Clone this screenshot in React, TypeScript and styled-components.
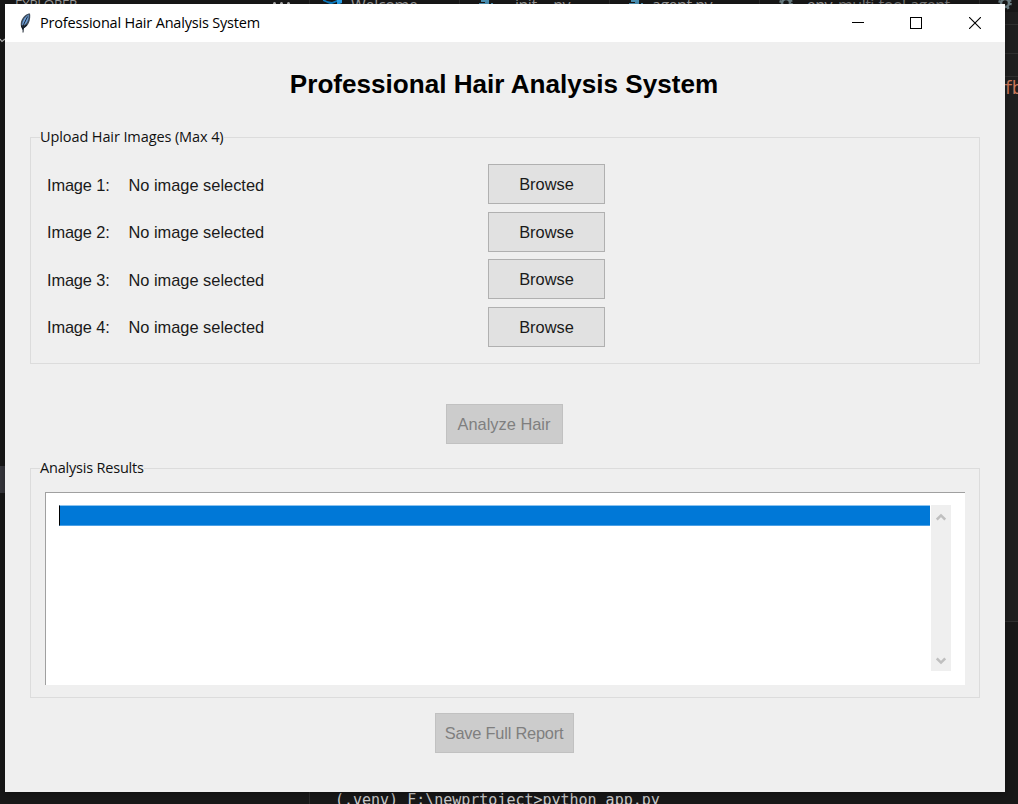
import React from "react";
import styled, { createGlobalStyle } from "styled-components";

const GlobalStyle = createGlobalStyle`
  * { box-sizing: border-box; }
  body { margin: 0; background: #181818; overflow: hidden; }
`;

const Desktop = styled.div`
  position: relative;
  width: 1018px;
  height: 804px;
  overflow: hidden;
  background: #181818;
`;

const Editor = styled.div`
  display: flex;
  flex-direction: column;
  justify-content: space-between;
  height: 804px;
`;

const TabStrip = styled.div`
  display: flex;
  height: 12px;
  overflow: hidden;
  font: 16px/20px "Open Sans", sans-serif;
  color: #9d9d9d;
`;

const Tab = styled.div<{ $width: number; $pad?: number; $tracking?: number }>`
  display: flex;
  flex: none;
  gap: 9px;
  width: ${(p) => p.$width}px;
  height: 20px;
  margin-top: -5px;
  padding-left: ${(p) => p.$pad ?? 18}px;
  border-right: 1px solid #2b2b2b;
  letter-spacing: ${(p) => p.$tracking ?? -0.3}px;
  white-space: pre;
  svg { flex: none; }
`;

const SideTitle = styled.span`
  font-size: 13.5px;
  width: 249px;
  margin-top: -1px;
  line-height: 20px;
  letter-spacing: -0.4px;
`;

const Dots = styled.span`
  display: flex;
  gap: 4px;
  padding-top: 7px;
  i { width: 3px; height: 3px; border-radius: 50%; background: #c0c0c0; }
`;

const DimText = styled.span`
  margin-left: -3px;
  color: #7a7a7a;
`;

const RightEdge = styled.div`
  position: absolute;
  left: 1005px;
  top: 12px;
  width: 13px;
  height: 610px;
  background: #1f1f1f;
  border-bottom: 1px solid #2f2f2f;
`;

const EdgeLine = styled.div<{ $gap: number }>`
  height: 1px;
  margin-top: ${(p) => p.$gap}px;
  background: #303030;
`;

const CodeText = styled.div`
  margin-left: -2px;
  font: 17px/22px "DejaVu Sans Mono", monospace;
  letter-spacing: -1.5px;
  color: #ce7a5c;
`;

const LeftEdge = styled.div`
  position: absolute;
  left: 0;
  top: 466px;
  width: 5px;
  height: 27px;
  background: #37373d;
`;

const EdgeChevron = styled.svg`
  position: absolute;
  left: 0;
  top: 37px;
`;

const Terminal = styled.div`
  height: 14px;
  margin-left: 309px;
  padding-left: 25px;
  border-left: 1px solid #2b2b2b;
  overflow: hidden;
  white-space: pre;
  color: #cccccc;
  font: 15px/20px "DejaVu Sans Mono", monospace;
  letter-spacing: -0.01px;
`;

const Window = styled.main`
  position: absolute;
  left: 5px;
  top: 4px;
  width: 1000px;
  height: 788px;
  display: flex;
  flex-direction: column;
  background: #efefef;
  box-shadow: 0 2px 8px rgba(0, 0, 0, 0.35);
`;

const TitleBar = styled.header`
  display: flex;
  align-items: center;
  flex: none;
  height: 38px;
  padding: 0 1px 0 13px;
  background: #fff;
`;

const TitleText = styled.span`
  flex: 1;
  margin-left: 7px;
  font: 14.5px/20px "Open Sans", sans-serif;
  letter-spacing: -0.19px;
  color: #000;
`;

const WindowButton = styled.div`
  display: flex;
  align-items: center;
  justify-content: center;
  width: 58.5px;
  height: 38px;
`;

const Body = styled.div`
  display: flex;
  flex-direction: column;
  align-items: center;
  flex: 1;
  padding: 27px 27px 0 25px;
  font-family: "Liberation Sans", Arial, sans-serif;
`;

const Heading = styled.h1`
  margin: 0 0 28px;
  height: 30px;
  font-size: 26.1px;
  line-height: 30px;
  font-weight: 700;
  color: #000;
  white-space: nowrap;
`;

const Group = styled.fieldset<{ $height: number; $pad: string }>`
  align-self: flex-start;
  width: 950px;
  height: ${(p) => p.$height}px;
  margin: 0;
  padding: ${(p) => p.$pad};
  border: 1px solid #dcdcdc;
`;

const Legend = styled.legend<{ $spacing: number; $inset: number }>`
  height: 20px;
  margin-left: ${(p) => p.$inset}px;
  padding: 0;
  font: 14.5px/20px "Open Sans", sans-serif;
  letter-spacing: ${(p) => p.$spacing}px;
  color: #111;
`;

const UploadGrid = styled.div`
  display: grid;
  grid-template-columns: 81.4px 359.6px 117px;
  grid-auto-rows: 40px;
  row-gap: 7.5px;
  align-items: center;
  font-size: 16.4px;
  line-height: 20px;
  color: #1a1a1a;
`;

const SlotText = styled.span<{ $tracking?: number }>`
  padding-top: 1px;
  letter-spacing: ${(p) => p.$tracking ?? 0}px;
`;

const Button = styled.button<{ $width: number; $tracking?: number }>`
  width: ${(p) => p.$width}px;
  height: 40px;
  padding: 0;
  border: 1px solid #b0b0b0;
  border-radius: 0;
  background: #e1e1e1;
  color: #1a1a1a;
  font: 16.4px/20px "Liberation Sans", Arial, sans-serif;
  letter-spacing: ${(p) => p.$tracking ?? 0}px;
  &:disabled {
    border-color: #c1c1c1;
    background: #cccccc;
    color: #7f7f7f;
  }
`;

const ActionRow = styled.div<{ $above: number; $below: number }>`
  margin: ${(p) => p.$above}px 0 ${(p) => p.$below}px;
  height: 40px;
`;

const TextFrame = styled.div`
  display: flex;
  width: 920px;
  height: 193px;
  padding: 12px 14px 13px 13px;
  background: #fff;
  border-top: 1px solid #a0a0a0;
  border-left: 1px solid #a0a0a0;
`;

const TextArea = styled.div`
  flex: 1;
  margin-right: 1px;
`;

const SelectedLine = styled.div`
  height: 21px;
  border-left: 1px solid #000;
  border-top: 1px solid #8cc3ee;
  border-bottom: 1px solid #4ca0e5;
  background: #0078d7;
`;

const ScrollBar = styled.div`
  display: flex;
  flex-direction: column;
  justify-content: space-between;
  align-items: center;
  width: 20px;
  height: 166px;
  padding: 8px 1px 6px 0;
  background: #efefef;
`;

const Feather = () => (
  <svg width="15" height="20" viewBox="0 0 15 20">
    <path d="M4.6 17.5 3.6 14.5C1.6 11 3.3 5.5 7 2.5 9 .9 11 .5 12 .6c.5 2.6.3 6-1 9-1.2 2.8-3 4.6-5 5.4z" fill="#3d4a5a" />
    <path d="M4.2 12C4 9 6 4.6 10.7 1.6c.3 3.2-.6 7.2-3.4 9.9L5.4 12z" fill="#6d9fd8" />
    <path d="M9.6 3.5 5.6 11.5 5 19.5" fill="none" stroke="#1b2430" strokeWidth="1" />
    <path d="M3.4 12.5 5 16M8.7 11.8 6 14.5" fill="none" stroke="#111820" strokeWidth="1.4" />
  </svg>
);

const Python = () => (
  <svg width="15" height="18" viewBox="0 0 15 18">
    <path d="M3 4h8v5H5v5H1V8h6V7H3zM13 8h2v7H6v-4h7z" fill="#4c94b8" />
  </svg>
);

const Gear = () => (
  <svg width="16" height="18" viewBox="0 0 16 18">
    <circle cx="8" cy="8" r="4" fill="none" stroke="#6d8086" strokeWidth="2.5" />
    <circle cx="8" cy="8" r="5.8" fill="none" stroke="#6d8086" strokeWidth="2" strokeDasharray="2.3 2.25" />
  </svg>
);

const CodeLogo = () => (
  <svg width="19" height="18" viewBox="0 0 19 18">
    <path d="M0 4 4 6l5 1 5-2v2L9 9H7L0 6z" fill="#0b7dc4" />
    <path d="M14 0h5v8l-5 2z" fill="#2aa4ee" />
  </svg>
);

const Arrow = ({ down }: { down?: boolean }) => (
  <svg width="10" height="8" viewBox="0 0 10 8">
    <path d={down ? "M.8 1.5 5 5.6l4.2-4.1" : "M.8 6.5 5 2.4l4.2 4.1"} fill="none" stroke="#bfbfbf" strokeWidth="2.5" />
  </svg>
);

const slots = [1, 2, 3, 4];

export default function App() {
  return (
    <Desktop>
      <GlobalStyle />
      <Editor>
        <TabStrip>
          <Tab $width={310} $pad={15}>
            <SideTitle>EXPLORER</SideTitle>
            <Dots><i /><i /><i /></Dots>
          </Tab>
          <Tab $width={150} $pad={13}><CodeLogo />Welcome</Tab>
          <Tab $width={150} $tracking={-0.5}><Python />__init__.py</Tab>
          <Tab $width={150} $tracking={-0.5}><Python />agent.py</Tab>
          <Tab $width={220} $tracking={-0.5}>
            <Gear />.env<DimText>multi-tool-agent</DimText>
          </Tab>
          <Tab $width={60} $pad={17}><Gear /></Tab>
        </TabStrip>
        <Terminal>{"(.venv) F:\\newprtoject>python app.py"}</Terminal>
      </Editor>
      <RightEdge>
        <EdgeLine $gap={12} />
        <EdgeLine $gap={28} />
        <EdgeLine $gap={22} />
        <CodeText>fb</CodeText>
      </RightEdge>
      <LeftEdge />
      <EdgeChevron width="5" height="8" viewBox="0 0 5 8">
        <path d="M0 2l2 2.5L5 2" fill="none" stroke="#c0c0c0" strokeWidth="1.2" />
      </EdgeChevron>

      <Window>
        <TitleBar>
          <Feather />
          <TitleText>Professional Hair Analysis System</TitleText>
          <WindowButton>
            <svg width="12" height="12"><path d="M0 5.5h12" stroke="#000" /></svg>
          </WindowButton>
          <WindowButton>
            <svg width="12" height="12"><rect x=".5" y=".5" width="11" height="11" fill="none" stroke="#000" /></svg>
          </WindowButton>
          <WindowButton>
            <svg width="12" height="12"><path d="M0 0l12 12M12 0 0 12" stroke="#000" strokeWidth="1.1" /></svg>
          </WindowButton>
        </TitleBar>

        <Body>
          <Heading>Professional Hair Analysis System</Heading>
          <Group $height={237} $pad="17.4px 0 0 16px">
            <Legend $spacing={-0.1} $inset={-7}>Upload Hair Images (Max 4)</Legend>
            <UploadGrid>
              {slots.map((n) => (
                <React.Fragment key={n}>
                  <SlotText $tracking={-0.15}>Image {n}:</SlotText>
                  <SlotText>No image selected</SlotText>
                  <Button $width={117}>Browse</Button>
                </React.Fragment>
              ))}
            </UploadGrid>
          </Group>
          <ActionRow $above={40} $below={14}>
            <Button $width={117} disabled>Analyze Hair</Button>
          </ActionRow>
          <Group $height={240} $pad="14px 0 0 14px">
            <Legend $spacing={-0.2} $inset={-5}>Analysis Results</Legend>
            <TextFrame>
              <TextArea>
                <SelectedLine />
              </TextArea>
              <ScrollBar>
                <Arrow />
                <Arrow down />
              </ScrollBar>
            </TextFrame>
          </Group>
          <ActionRow $above={15} $below={0}>
            <Button $width={139} $tracking={-0.22} disabled>Save Full Report</Button>
          </ActionRow>
        </Body>
      </Window>
    </Desktop>
  );
}
